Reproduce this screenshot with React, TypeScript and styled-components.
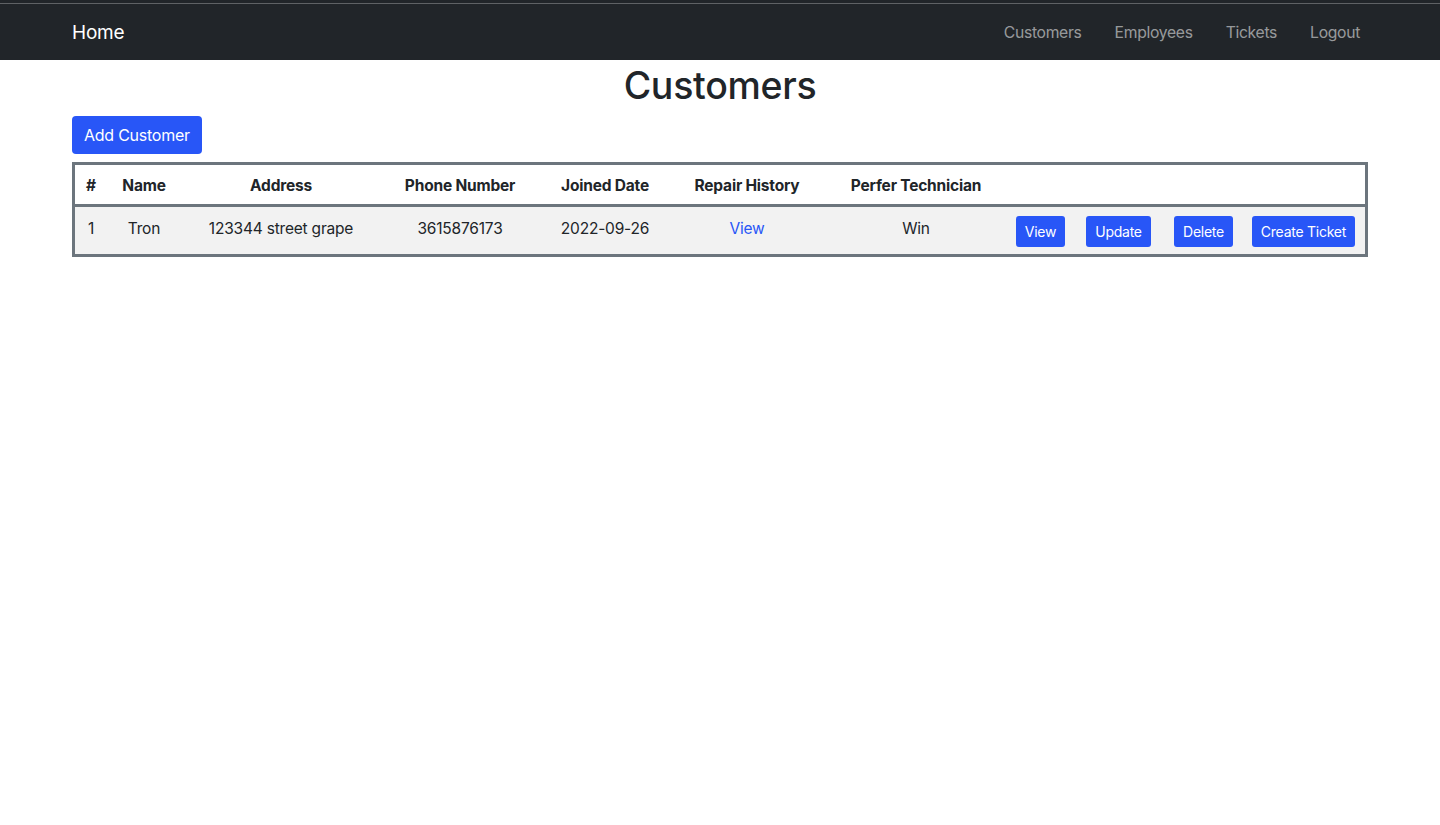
import React from "react";
import styled, { createGlobalStyle } from "styled-components";

const GlobalStyle = createGlobalStyle`
  * { box-sizing: border-box; }
  body {
    margin: 0;
    background: #fff;
    color: #212529;
    font-family: Inter, "Noto Sans", "Liberation Sans", sans-serif;
    font-size: 16px;
    line-height: 1.5;
  }
`;

const Navbar = styled.nav`
  height: 60px;
  background: linear-gradient(to bottom, #212529 0 3px, #5f6265 3px 4px, #212529 4px);
  display: flex;
  align-items: center;
`;

const NavContainer = styled.div`
  width: 1296px;
  margin: 0 auto;
  display: flex;
  align-items: center;
  justify-content: space-between;
  padding-top: 5px;
`;

const Brand = styled.a`
  color: #fff;
  font-size: 19px;
  text-decoration: none;
  letter-spacing: -0.2px;
  padding-top: 2px;
`;

const NavLinks = styled.div`
  display: flex;
  gap: 17px;
`;

const NavLink = styled.a`
  color: rgba(255, 255, 255, 0.55);
  font-size: 15.7px;
  text-decoration: none;
  padding: 0 8px;
  letter-spacing: -0.3px;
`;

const Main = styled.main`
  width: 1296px;
  margin: 0 auto;
`;

const Title = styled.h1`
  margin: 0 0 6px;
  padding-top: 2px;
  text-align: center;
  font-size: 37.5px;
  font-weight: 500;
  line-height: 48px;
  letter-spacing: -0.3px;
`;

const Button = styled.button<{ $small?: boolean }>`
  background: #2856f7;
  color: #fff;
  border: none;
  border-radius: ${(p) => (p.$small ? "3px" : "4px")};
  font-family: inherit;
  font-size: ${(p) => (p.$small ? "14px" : "16px")};
  line-height: ${(p) => (p.$small ? "31px" : "38px")};
  height: ${(p) => (p.$small ? "31px" : "38px")};
  padding: ${(p) => (p.$small ? "0 9px" : "0 12px")};
  letter-spacing: -0.25px;
  cursor: pointer;
  white-space: nowrap;
`;

const Table = styled.table`
  margin-top: 8px;
  width: 100%;
  table-layout: fixed;
  border-collapse: separate;
  border-spacing: 0;
  border: 3px solid #6c757d;
`;

const Th = styled.th`
  height: 42px;
  padding: 3px 0 0;
  font-weight: 700;
  font-size: 15.5px;
  text-align: center;
  vertical-align: middle;
  border-bottom: 3px solid #6c757d;
  letter-spacing: -0.2px;
  white-space: nowrap;
`;

const BodyRow = styled.tr`
  background: #f2f2f2;
`;

const Td = styled.td`
  height: 47px;
  padding: 0 0 4px;
  text-align: center;
  vertical-align: middle;
  font-size: 15.5px;
  letter-spacing: -0.2px;
  white-space: nowrap;
`;

const ActionCell = styled(Td)`
  padding: 2px 0 0;
`;

const LinkText = styled.a`
  color: #2856f7;
  text-decoration: none;
`;

const widths = [32, 74, 200, 158, 132, 152, 186, 63, 93, 77, 123];
const headers = ["#", "Name", "Address", "Phone Number", "Joined Date", "Repair History", "Perfer Technician", "", "", "", ""];

export default function App() {
  return (
    <>
      <GlobalStyle />
      <Navbar>
        <NavContainer>
          <Brand href="#">Home</Brand>
          <NavLinks>
            <NavLink href="#">Customers</NavLink>
            <NavLink href="#">Employees</NavLink>
            <NavLink href="#">Tickets</NavLink>
            <NavLink href="#">Logout</NavLink>
          </NavLinks>
        </NavContainer>
      </Navbar>
      <Main>
        <Title>Customers</Title>
        <Button>Add Customer</Button>
        <Table>
          <colgroup>
            {widths.map((w, i) => (
              <col key={i} style={{ width: w }} />
            ))}
          </colgroup>
          <thead>
            <tr>
              {headers.map((h, i) => (
                <Th key={i}>{h}</Th>
              ))}
            </tr>
          </thead>
          <tbody>
            <BodyRow>
              <Td>1</Td>
              <Td>Tron</Td>
              <Td>123344 street grape</Td>
              <Td>3615876173</Td>
              <Td>2022-09-26</Td>
              <Td>
                <LinkText href="#">View</LinkText>
              </Td>
              <Td>Win</Td>
              <ActionCell>
                <Button $small>View</Button>
              </ActionCell>
              <ActionCell>
                <Button $small>Update</Button>
              </ActionCell>
              <ActionCell>
                <Button $small>Delete</Button>
              </ActionCell>
              <ActionCell>
                <Button $small>Create Ticket</Button>
              </ActionCell>
            </BodyRow>
          </tbody>
        </Table>
      </Main>
    </>
  );
}
